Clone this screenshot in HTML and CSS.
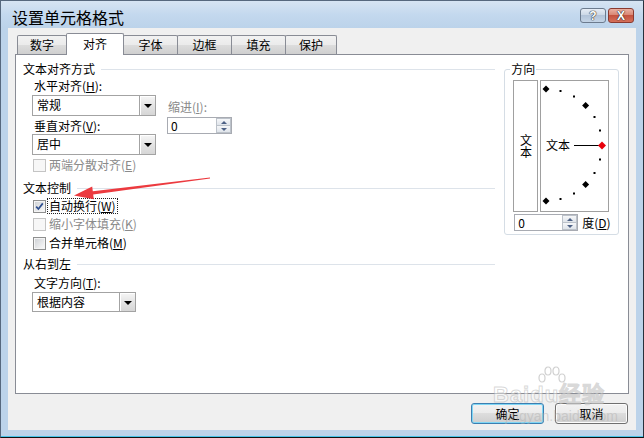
FILE: index.html
```html
<!DOCTYPE html>
<html lang="zh-CN">
<head>
  <meta charset="UTF-8" />
  <title>设置单元格格式</title>
  <link rel="stylesheet" href="styles.css">
</head>
<body>
  <div class="window">
    <div class="titlebar">
      <span class="title">设置单元格格式</span>
      <div class="caption-btns">
        <span class="cap-btn help">?</span>
        <span class="cap-btn close">X</span>
      </div>
    </div>

    <div class="content">
      <div class="tabs">
        <div class="tab">数字</div>
        <div class="tab active">对齐</div>
        <div class="tab">字体</div>
        <div class="tab">边框</div>
        <div class="tab">填充</div>
        <div class="tab">保护</div>
      </div>

      <div class="panel">
        <div class="left">
          <div class="section-title"><span>文本对齐方式</span></div>
          <div class="section-body">
            <div class="align-row">
              <div class="align-col">
                <div class="label">水平对齐(<u>H</u>):</div>
                <div class="combo combo-wide">
                  <span class="combo-text">常规</span>
                  <span class="combo-btn"><i class="tri"></i></span>
                </div>
                <div class="label label-gap">垂直对齐(<u>V</u>):</div>
                <div class="combo combo-wide combo-tight">
                  <span class="combo-text">居中</span>
                  <span class="combo-btn"><i class="tri"></i></span>
                </div>
              </div>
              <div class="indent-col">
                <div class="label disabled">缩进(<u>I</u>):</div>
                <div class="spin indent-spin">
                  <span class="spin-text">0</span>
                  <span class="spin-btns">
                    <span class="spin-up"><i class="tri-up"></i></span>
                    <span class="spin-down"><i class="tri-down"></i></span>
                  </span>
                </div>
              </div>
            </div>
            <div class="check small disabled">
              <span class="box"></span>
              <span class="check-label">两端分散对齐(<u>E</u>)</span>
            </div>
          </div>

          <div class="section-title sec-control"><span>文本控制</span></div>
          <div class="section-body">
            <div class="check first checked">
              <span class="box">
                <svg width="9" height="9" viewBox="0 0 9 9"><path d="M1.2 4.6 L3.4 7 L7.8 1.4" fill="none" stroke="#2d4e8f" stroke-width="1.7"/></svg>
              </span>
              <span class="check-label focused">自动换行(<u>W</u>)</span>
            </div>
            <div class="check second disabled">
              <span class="box"></span>
              <span class="check-label">缩小字体填充(<u>K</u>)</span>
            </div>
            <div class="check third">
              <span class="box"></span>
              <span class="check-label">合并单元格(<u>M</u>)</span>
            </div>
          </div>

          <div class="section-title sec-rtl"><span>从右到左</span></div>
          <div class="section-body">
            <div class="label label-dir">文字方向(<u>T</u>):</div>
            <div class="combo combo-dir">
              <span class="combo-text">根据内容</span>
              <span class="combo-btn"><i class="tri"></i></span>
            </div>
          </div>
        </div>

        <fieldset class="orient">
          <legend>方向</legend>
          <div class="orient-boxes">
            <div class="vtext"><span>文本</span></div>
            <div class="dial">
              <svg width="67" height="130" viewBox="0 0 67 130">
                <g fill="#000">
                  <path d="M5 4.5 L8.5 8 L5 11.5 L1.5 8 Z"/>
                  <rect x="18.5" y="9" width="2" height="2"/>
                  <rect x="32" y="14.5" width="2" height="2"/>
                  <path d="M44.6 20.9 L48.1 24.4 L44.6 27.9 L41.1 24.4 Z"/>
                  <rect x="52.5" y="35" width="2" height="2"/>
                  <rect x="58" y="48.5" width="2" height="2"/>
                  <rect x="58" y="77.5" width="2" height="2"/>
                  <rect x="52.5" y="91" width="2" height="2"/>
                  <path d="M44.6 100.1 L48.1 103.6 L44.6 107.1 L41.1 103.6 Z"/>
                  <rect x="32" y="111.5" width="2" height="2"/>
                  <rect x="18.5" y="117" width="2" height="2"/>
                  <path d="M5 116.5 L8.5 120 L5 123.5 L1.5 120 Z"/>
                </g>
                <line x1="33" y1="64.5" x2="58" y2="64.5" stroke="#000" stroke-width="1"/>
                <path d="M61 60.5 L65 64.5 L61 68.5 L57 64.5 Z" fill="#e8000b"/>
                <text x="5" y="69" font-size="12" font-family="Noto Sans CJK SC, sans-serif">文本</text>
              </svg>
            </div>
          </div>
          <div class="degree-row">
            <div class="spin degree-spin">
              <span class="spin-text">0</span>
              <span class="spin-btns">
                <span class="spin-up"><i class="tri-up"></i></span>
                <span class="spin-down"><i class="tri-down"></i></span>
              </span>
            </div>
            <span class="degree-label">度(<u>D</u>)</span>
          </div>
        </fieldset>
      </div>

      <div class="footer">
        <span class="btn default">确定</span>
        <span class="btn">取消</span>
      </div>
    </div>

    <!-- annotation arrow drawn over the dialog -->
    <svg class="arrow" width="644" height="438" viewBox="0 0 644 438">
      <polygon points="74,195.5 93.8,199.2 93.2,194.4 210,178.4 210,177.6 92.8,191.2 92.2,186.6" fill="#ec3a3f"/>
    </svg>

    <div class="watermark">
      <svg class="paw" width="34" height="22" viewBox="0 0 34 22">
        <g fill="none" stroke="rgba(170,170,170,0.55)" stroke-width="1.2">
          <ellipse cx="7" cy="12" rx="3" ry="4"/>
          <ellipse cx="13" cy="5" rx="3" ry="4"/>
          <ellipse cx="21" cy="5" rx="3" ry="4"/>
          <ellipse cx="27" cy="12" rx="3" ry="4"/>
        </g>
      </svg>
      <div class="wm-main">Baidu经验</div>
      <div class="wm-url">jingyan.baidu.com</div>
    </div>
  </div>
</body>
</html>
```

FILE: styles.css
```css
* {
  box-sizing: border-box;
}

body {
  margin: 0;
  font-family: "Noto Sans CJK SC", "Liberation Sans", sans-serif;
  font-size: 12px;
  color: #000;
  background: #bcd3ea;
}

u {
  text-decoration: underline;
  text-underline-offset: 1px;
}

.window {
  position: relative;
  width: 644px;
  height: 438px;
  display: flex;
  flex-direction: column;
  padding: 0 7px 7px 7px;
  border: 1px solid #56687e;
  border-right-color: #27313d;
  border-bottom-color: #111;
  background: linear-gradient(#d6e4f3, #c3d8ee 14px, #bcd3ea 27px, #bcd3ea);
  box-shadow: inset 0 -1px 0 #48c3e8;
}

.titlebar {
  height: 27px;
  margin: 0 -7px;
  padding: 0 9px 0 11px;
  display: flex;
  justify-content: space-between;
  align-items: flex-start;
}

.title {
  margin-top: 6px;
  font-size: 16px;
  line-height: 20px;
}

.caption-btns {
  display: flex;
  gap: 2px;
  margin-top: 7px;
}

.cap-btn {
  width: 26px;
  height: 15px;
  border-radius: 3px;
  display: flex;
  align-items: center;
  justify-content: center;
  font-family: "Liberation Sans", sans-serif;
  font-weight: bold;
  font-size: 12px;
  color: #fff;
  text-shadow: 0 0 1px #333, 0 0 1px #333, 0 0 1px #333;
}

.help {
  border: 1px solid #6c7b8e;
  background: linear-gradient(#e6edf5, #c9d6e5 50%, #b3c4d9 50%, #c4d4e6);
}

.close {
  border: 1px solid #8a3a30;
  background: linear-gradient(#eab0a2, #d7826f 50%, #c4523f 50%, #d5705a);
}

.content {
  flex: 1;
  display: flex;
  flex-direction: column;
  padding: 5px 7px 0 7px;
  background: #f0f0f0;
}

/* tabs */

.tabs {
  height: 21px;
  margin-left: 2px;
  display: flex;
  align-items: flex-end;
  position: relative;
  z-index: 1;
}

.tab {
  height: 19px;
  margin-left: -1px;
  border: 1px solid #898c95;
  border-bottom: none;
  border-radius: 2px 2px 0 0;
  background: linear-gradient(#f2f2f2, #ebebeb 50%, #dddddd 50%, #cfcfcf);
  text-align: center;
  line-height: 18px;
}

.tab:nth-child(1) { width: 50px; margin-left: 0; }
.tab:nth-child(2) { width: 58px; }
.tab:nth-child(3) { width: 55px; }
.tab:nth-child(4) { width: 55px; }
.tab:nth-child(5) { width: 55px; }
.tab:nth-child(6) { width: 52px; }

.tab.active {
  height: 22px;
  margin-bottom: -1px;
  background: #fff;
  line-height: 20px;
  position: relative;
  z-index: 2;
}

/* tab page */

.panel {
  height: 340px;
  display: flex;
  align-items: flex-start;
  padding: 7px 9px 0 7px;
  border: 1px solid #898c95;
  background: #fff;
}

.left {
  width: 473px;
}

.section-title {
  height: 14px;
  line-height: 14px;
  display: flex;
  align-items: center;
}

.section-title::after {
  content: "";
  flex: 1;
  height: 1px;
  margin-left: 6px;
  background: #dde3ea;
}

.sec-control {
  margin-top: 9px;
}

.sec-rtl {
  margin-top: 6px;
}

.section-body {
  padding-left: 10px;
}

.label {
  height: 14px;
  line-height: 14px;
  padding-left: 1px;
}

.disabled,
.disabled .check-label {
  color: #8a8a8a;
}

.align-row {
  display: flex;
  margin-top: 3px;
}

.align-col {
  width: 124px;
}

.label-gap {
  margin-top: 3px;
}

.indent-col {
  margin-left: 10px;
  padding-top: 21px;
}

.indent-spin {
  margin-top: 3px;
  width: 65px;
}

/* combo boxes */

.combo {
  display: flex;
  height: 21px;
  margin-left: -1px;
  border: 1px solid #a3a3a3;
  background: #fff;
}

.combo-wide {
  width: 124px;
  margin-top: 2px;
}

.combo-tight {
  margin-top: 1px;
}

.combo-dir {
  width: 104px;
  height: 20px;
  margin-top: 2px;
}

.combo-text {
  flex: 1;
  padding-left: 4px;
  line-height: 18px;
}

.combo-btn {
  width: 16px;
  display: flex;
  align-items: center;
  justify-content: center;
  border-left: 1px solid #a3a3a3;
  background: linear-gradient(#f6f6f6, #e4e4e4 50%, #d6d6d6);
  box-shadow: inset 1px 1px 0 #fff;
}

.tri {
  width: 0;
  height: 0;
  border-left: 4px solid transparent;
  border-right: 4px solid transparent;
  border-top: 4px solid #000;
  margin-top: 1px;
}

/* spinners */

.spin {
  display: flex;
  flex-shrink: 0;
  height: 17px;
  border: 1px solid #a8abb2;
  background: #fff;
}

.spin-text {
  flex: 1;
  padding-left: 3px;
  line-height: 15px;
}

.spin-btns {
  width: 15px;
  display: flex;
  flex-direction: column;
}

.spin-up,
.spin-down {
  flex: 1;
  display: flex;
  align-items: center;
  justify-content: center;
  border: 1px solid #bcc2ca;
  background: linear-gradient(#f6f7f9, #dfe4ea);
}

.spin-down {
  border-top: none;
}

.tri-up,
.tri-down {
  width: 0;
  height: 0;
  border-left: 3px solid transparent;
  border-right: 3px solid transparent;
}

.tri-up {
  border-bottom: 3px solid #4d6185;
}

.tri-down {
  border-top: 3px solid #4d6185;
}

/* check boxes */

.check {
  display: flex;
  align-items: center;
  height: 16px;
}

.check.small {
  height: 14px;
  margin-top: 3px;
}

.check.first { margin-top: 3px; }
.check.second { margin-top: 2px; }
.check.third { margin-top: 3px; }

.box {
  width: 13px;
  height: 13px;
  padding: 1px;
  display: flex;
  align-items: center;
  justify-content: center;
  border: 1px solid #8e8f8f;
  background: linear-gradient(135deg, #d0d3d7, #f8f8f8) content-box, #f4f4f4;
}

.disabled .box {
  border-color: #c4c4c4;
  background: #f7f7f7;
}

.check-label {
  margin-left: 1px;
  padding: 0 1px;
  height: 16px;
  line-height: 14px;
  border: 1px dotted transparent;
}

.check.small .check-label {
  height: 14px;
  line-height: 12px;
}

.check-label.focused {
  border-color: #222;
}

.label-dir {
  margin-top: 5px;
}

/* orientation */

.orient {
  width: 115px;
  margin: 0 0 0 9px;
  padding: 0 9px 3px 8px;
  border: 1px solid #d5dde5;
  border-radius: 3px;
  min-inline-size: 0;
}

.orient legend {
  margin-left: -3px;
  padding: 0 1px;
  line-height: 14px;
}

.orient-boxes {
  display: flex;
  gap: 2px;
  height: 132px;
  margin-top: 4px;
}

.vtext {
  width: 25px;
  display: flex;
  align-items: center;
  justify-content: center;
  border: 1px solid #a0a0a0;
}

.vtext span {
  writing-mode: vertical-rl;
  line-height: 12px;
}

.dial {
  width: 69px;
  border: 1px solid #a0a0a0;
}

.dial svg {
  display: block;
}

.degree-row {
  display: flex;
  align-items: center;
  margin-top: 2px;
  margin-right: -12px;
}

.degree-spin {
  width: 64px;
  margin-left: 1px;
}

.degree-label {
  margin-left: 4px;
  white-space: nowrap;
}

/* footer buttons */

.footer {
  display: flex;
  justify-content: flex-end;
  gap: 11px;
  margin-top: 9px;
  padding-right: 1px;
}

.btn {
  width: 73px;
  height: 21px;
  display: flex;
  align-items: center;
  justify-content: center;
  border: 1px solid #707070;
  border-radius: 3px;
  background: linear-gradient(#f2f2f2, #ebebeb 50%, #dddddd 50%, #cfcfcf);
  box-shadow: inset 0 0 0 1px #fcfcfc;
}

.btn.default {
  border-color: #3c7fb1;
  box-shadow: inset 0 0 0 1px #7fd6f5;
}

/* overlays */

.arrow {
  position: absolute;
  left: -1px;
  top: -1px;
  pointer-events: none;
}

.watermark {
  position: absolute;
  left: 492px;
  top: 363px;
  width: 130px;
  pointer-events: none;
}

.paw {
  position: absolute;
  left: 42px;
  top: 2px;
}

.wm-main {
  position: absolute;
  left: 0;
  top: 12px;
  font-family: "Liberation Sans", sans-serif;
  font-size: 22px;
  font-weight: bold;
  letter-spacing: 1px;
  color: rgba(255, 255, 255, 0.45);
  -webkit-text-stroke: 1px rgba(170, 170, 170, 0.45);
}

.wm-url {
  position: absolute;
  left: 12px;
  top: 44px;
  font-family: "Liberation Sans", sans-serif;
  font-size: 14px;
  color: rgba(175, 175, 175, 0.45);
}
```
